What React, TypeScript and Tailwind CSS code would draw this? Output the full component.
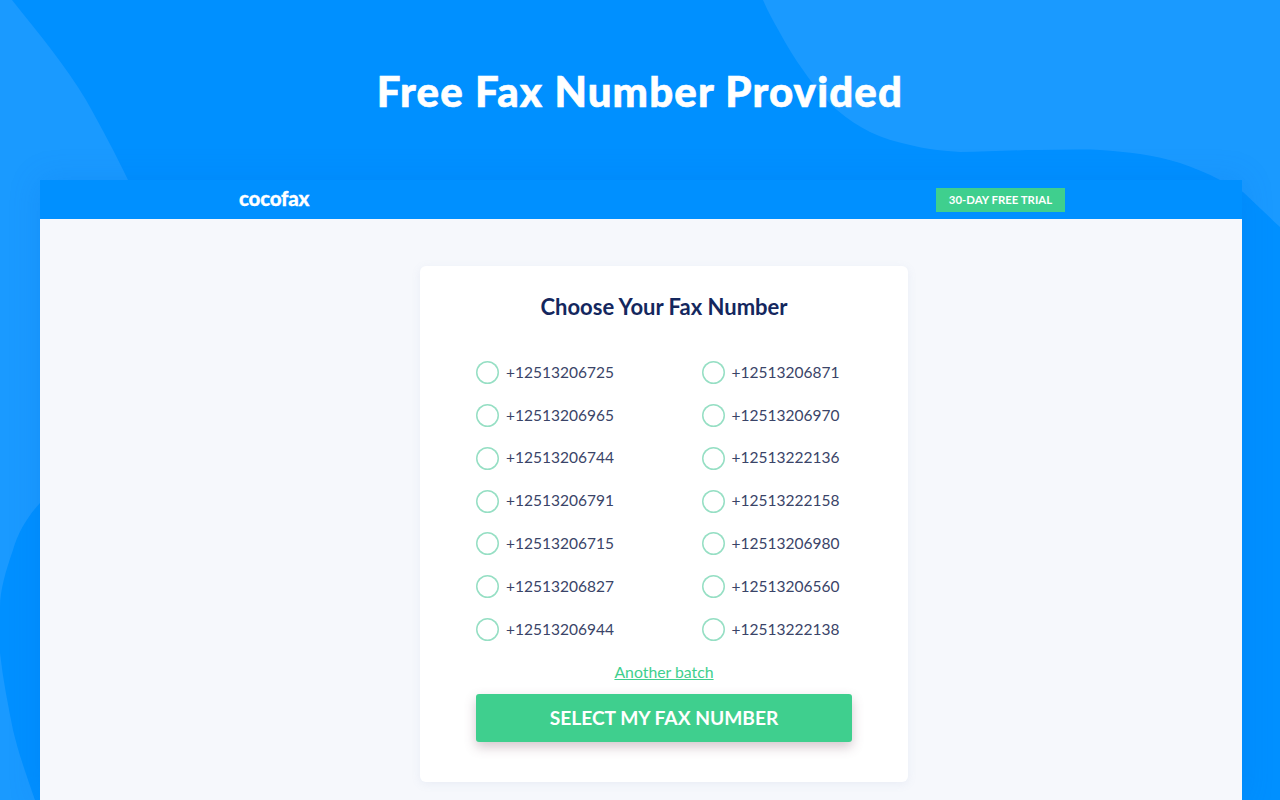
import React from 'react';

const leftNumbers = ['+12513206725', '+12513206965', '+12513206744', '+12513206791', '+12513206715', '+12513206827', '+12513206944'];
const rightNumbers = ['+12513206871', '+12513206970', '+12513222136', '+12513222158', '+12513206980', '+12513206560', '+12513222138'];

const FONT = "font-['Lato','Open_Sans',sans-serif]";

const NumberOption: React.FC<{ value: string }> = ({ value }) => (
  <label className="flex h-[23px] items-center">
    <span className="h-[23px] w-[23px] shrink-0 rounded-full bg-white shadow-[inset_0_0_0_1.5px_#96dfc4]" />
    <span className="ml-[7px] text-[15.5px] leading-none text-[#3a4468]">{value}</span>
  </label>
);

const Background: React.FC = () => (
  <svg className="absolute inset-0 h-full w-full" viewBox="0 0 1280 800" fill="#1a9aff">
    {/* top right blob */}
    <path d="M763 0 C768 12 774 22 780 33 C787 46 795 59 803 70 C813 85 825 99 837 110 C848 119 858 126 870 132 C883 138 896 142 910 145 C926 149 943 151 960 152 C985 152 1012 150 1040 150 C1060 150 1080 149 1100 150 C1114 151 1127 152 1140 154 C1154 156 1167 159 1180 163 C1194 168 1207 173 1220 180 C1228 184 1236 188 1243 192 C1256 204 1268 216 1280 227 L1280 0 Z" />
    {/* left side */}
    <path d="M0 0 L12 0 C40 35 65 65 86 100 C103 130 116 155 128 180 L128 300 L40 503 C28 516 18 532 13 550 C6 570 0 590 0 607 L0 653 C3 680 8 705 13 730 C19 755 28 780 35 800 L0 800 Z" />
  </svg>
);

export default function App() {
  return (
    <div className={`relative h-[800px] w-[1280px] overflow-hidden bg-[#0090ff] ${FONT}`}>
      <Background />
      <div className="relative">
        <h1 className="flex h-[180px] items-center justify-center pt-[2px] text-[42px] font-black tracking-[1.15px] text-white [-webkit-text-stroke:0.6px_white]">
          Free Fax Number Provided
        </h1>
        <div className="ml-[40px] w-[1202px] shadow-[0_0_30px_rgba(0,100,220,0.18)]">
          <header className="flex h-[39px] items-center justify-between bg-[#0090ff] pl-[199px] pr-[177px]">
            <span className="-translate-y-px text-[20.5px] font-black leading-none tracking-[-0.2px] text-white [-webkit-text-stroke:0.3px_white]">cocofax</span>
            <span className="flex h-[24px] w-[129px] items-center justify-center bg-[#3fcf8e] text-[11.4px] font-bold text-white">
              30-DAY FREE TRIAL
            </span>
          </header>
          <main className="h-[581px] bg-[#f6f8fc] pl-[380px] pt-[47px]">
            <section className="h-[516px] w-[488px] rounded-[6px] bg-white px-[56px] pt-[26px] shadow-[0_2px_10px_rgba(120,140,190,0.1)]">
              <h2 className="text-center text-[22px] font-bold leading-[30px] text-[#14275e]">Choose Your Fax Number</h2>
              <div className="mt-[39px] grid grid-cols-[225.5px_1fr] gap-y-[19.85px]">
                {leftNumbers.map((n, i) => (
                  <React.Fragment key={n}>
                    <NumberOption value={n} />
                    <NumberOption value={rightNumbers[i]} />
                  </React.Fragment>
                ))}
              </div>
              <div className="mt-[21px] text-center leading-[20px]">
                <a href="#" className="text-[15.8px] text-[#3fcf8e] underline">Another batch</a>
              </div>
              <button className="mt-[12px] h-[48px] w-[376px] rounded-[3px] bg-[#3fcf8e] text-[19.2px] font-bold text-white shadow-[0_5px_12px_rgba(110,70,90,0.3)]">
                SELECT MY FAX NUMBER
              </button>
            </section>
          </main>
        </div>
      </div>
    </div>
  );
}
